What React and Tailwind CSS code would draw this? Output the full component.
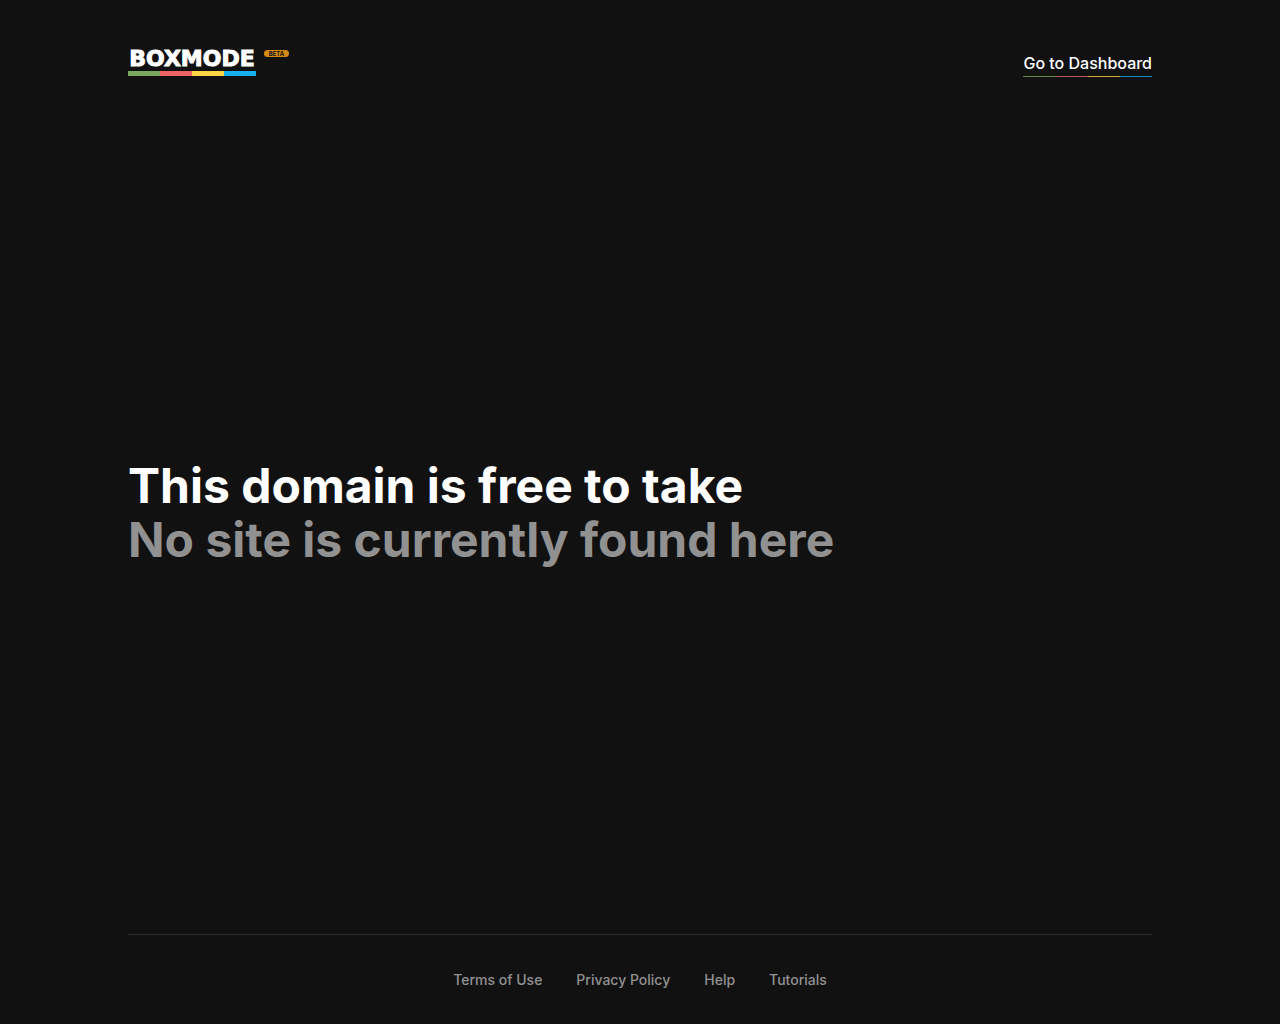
import React from "react";

const footerLinks = ["Terms of Use", "Privacy Policy", "Help", "Tutorials"];

function ColorBar({ className }) {
  return (
    <span className={`grid grid-cols-4 ${className}`}>
      <span className="bg-[#7aa860]" />
      <span className="bg-[#ea6466]" />
      <span className="bg-[#fbd546]" />
      <span className="bg-[#18aef2]" />
    </span>
  );
}

function Logo() {
  return (
    <a href="#" className="flex items-start gap-2" aria-label="Boxmode beta">
      <span className="flex w-32 flex-col">
        <span className="flex h-[21px] items-start justify-center whitespace-nowrap font-['DejaVu_Sans',sans-serif] text-[22px] font-bold leading-[18px] [-webkit-text-stroke:1px_#fff]">
          BOXMODE
        </span>
        <ColorBar className="h-[5px]" />
      </span>
      <span className="flex h-[7px] w-[25px] items-center justify-center rounded-full bg-[#d68a12] text-[6px] font-bold leading-none text-[#111]">
        BETA
      </span>
    </a>
  );
}

export default function App() {
  return (
    <div className="flex min-h-screen flex-col bg-[#111] px-[10%] font-['Inter',sans-serif] text-white">
      <header className="flex items-start justify-between pt-[50px] pb-[14px]">
        <Logo />
        <a href="#" className="flex flex-col pt-px font-medium leading-6">
          Go to Dashboard
          <ColorBar className="mt-px h-px opacity-80" />
        </a>
      </header>
      <main className="flex flex-1 flex-col justify-center">
        <h1 className="text-5xl font-bold leading-[54px]">
          This domain is free to take
          <span className="block text-[#919191]">
            No site is currently found here
          </span>
        </h1>
      </main>
      <footer className="border-t border-[#2d2d2d] py-[34px]">
        <nav className="flex justify-center gap-[34px] text-sm font-medium leading-[21px] text-[#919191]">
          {footerLinks.map((label) => (
            <a key={label} href="#">
              {label}
            </a>
          ))}
        </nav>
      </footer>
    </div>
  );
}
